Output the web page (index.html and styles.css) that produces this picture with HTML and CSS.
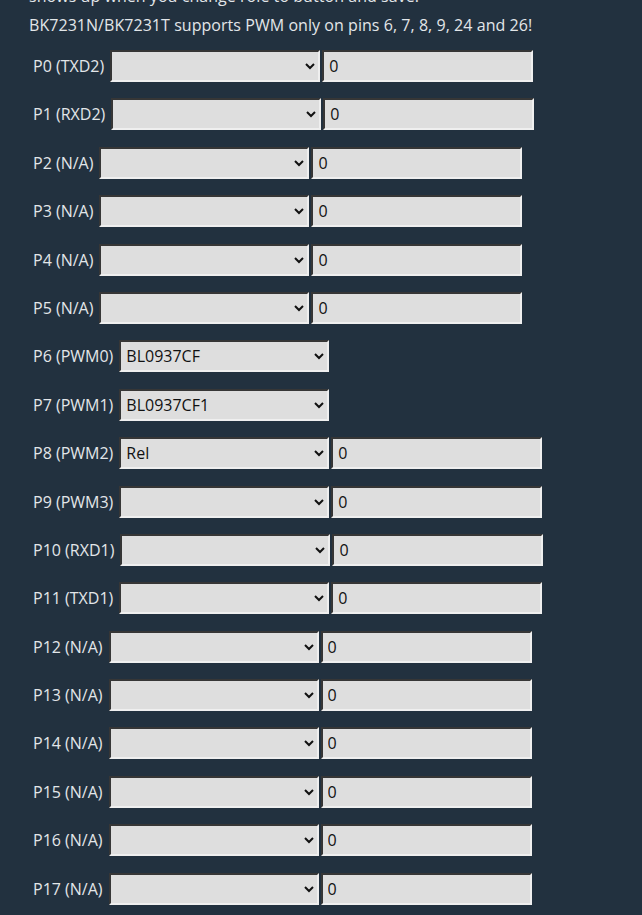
FILE: index.html
```html
<!DOCTYPE html>
<html>
<head>
<meta charset="utf-8">
<link rel="stylesheet" href="styles.css">
</head>
<body>
<div class="page">
  <div class="intro">
    <div class="line first">shows up when you change role to button and save.</div>
    <div class="line">BK7231N/BK7231T supports PWM only on pins 6, 7, 8, 9, 24 and 26!</div>
  </div>
  <div class="pins">
    <div class="pin"><span class="lbl">P0 (TXD2)</span><select class="sel"><option></option></select><input class="val" value="0"></div>
    <div class="pin"><span class="lbl">P1 (RXD2)</span><select class="sel"><option></option></select><input class="val" value="0"></div>
    <div class="pin"><span class="lbl">P2 (N/A)</span><select class="sel"><option></option></select><input class="val" value="0"></div>
    <div class="pin"><span class="lbl">P3 (N/A)</span><select class="sel"><option></option></select><input class="val" value="0"></div>
    <div class="pin"><span class="lbl">P4 (N/A)</span><select class="sel"><option></option></select><input class="val" value="0"></div>
    <div class="pin"><span class="lbl">P5 (N/A)</span><select class="sel"><option></option></select><input class="val" value="0"></div>
    <div class="pin"><span class="lbl">P6 (PWM0)</span><select class="sel"><option>BL0937CF</option></select></div>
    <div class="pin"><span class="lbl">P7 (PWM1)</span><select class="sel"><option>BL0937CF1</option></select></div>
    <div class="pin"><span class="lbl">P8 (PWM2)</span><select class="sel"><option>Rel</option></select><input class="val" value="0"></div>
    <div class="pin"><span class="lbl">P9 (PWM3)</span><select class="sel"><option></option></select><input class="val" value="0"></div>
    <div class="pin"><span class="lbl">P10 (RXD1)</span><select class="sel"><option></option></select><input class="val" value="0"></div>
    <div class="pin"><span class="lbl">P11 (TXD1)</span><select class="sel"><option></option></select><input class="val" value="0"></div>
    <div class="pin"><span class="lbl">P12 (N/A)</span><select class="sel"><option></option></select><input class="val" value="0"></div>
    <div class="pin"><span class="lbl">P13 (N/A)</span><select class="sel"><option></option></select><input class="val" value="0"></div>
    <div class="pin"><span class="lbl">P14 (N/A)</span><select class="sel"><option></option></select><input class="val" value="0"></div>
    <div class="pin"><span class="lbl">P15 (N/A)</span><select class="sel"><option></option></select><input class="val" value="0"></div>
    <div class="pin"><span class="lbl">P16 (N/A)</span><select class="sel"><option></option></select><input class="val" value="0"></div>
    <div class="pin"><span class="lbl">P17 (N/A)</span><select class="sel"><option></option></select><input class="val" value="0"></div>
  </div>
</div>
</body>
</html>
```
FILE: styles.css
```css
html, body {
  margin: 0;
  padding: 0;
  background: #22313f;
  height: 100%;
  overflow: hidden;
}
.page {
  font-family: "Open Sans", "Noto Sans", sans-serif;
  font-size: 16px;
  color: #e2e6e9;
}
.intro {
  margin-top: -18.5px;
  padding-left: 29px;
}
.line {
  line-height: 28px;
  white-space: nowrap;
  letter-spacing: 0.05px;
}
.line.first {
  margin-bottom: 1.5px;
}
.pins {
  display: flex;
  flex-direction: column;
  gap: 16.4px;
  margin-top: 11px;
  padding-left: 33px;
}
.pin {
  display: flex;
  align-items: center;
  height: 32px;
}
.lbl {
  margin-right: 6px;
  white-space: nowrap;
}
.sel, .val {
  box-sizing: border-box;
  height: 32px;
  font-family: "Open Sans", "Noto Sans", sans-serif;
  font-size: 16px;
  color: #111;
  background-color: #dedede;
  border: 2px inset #eeeeee;
  border-top-color: #8a8a8a;
  border-left-color: #8a8a8a;
  border-right-color: #efefef;
  border-bottom-color: #efefef;
  margin: 0;
  border-radius: 0;
}
.sel {
  width: 210px;
  padding: 0 1px;
}
.val {
  width: 211px;
  margin-left: 2px;
  padding: 0 5px;
}
```
